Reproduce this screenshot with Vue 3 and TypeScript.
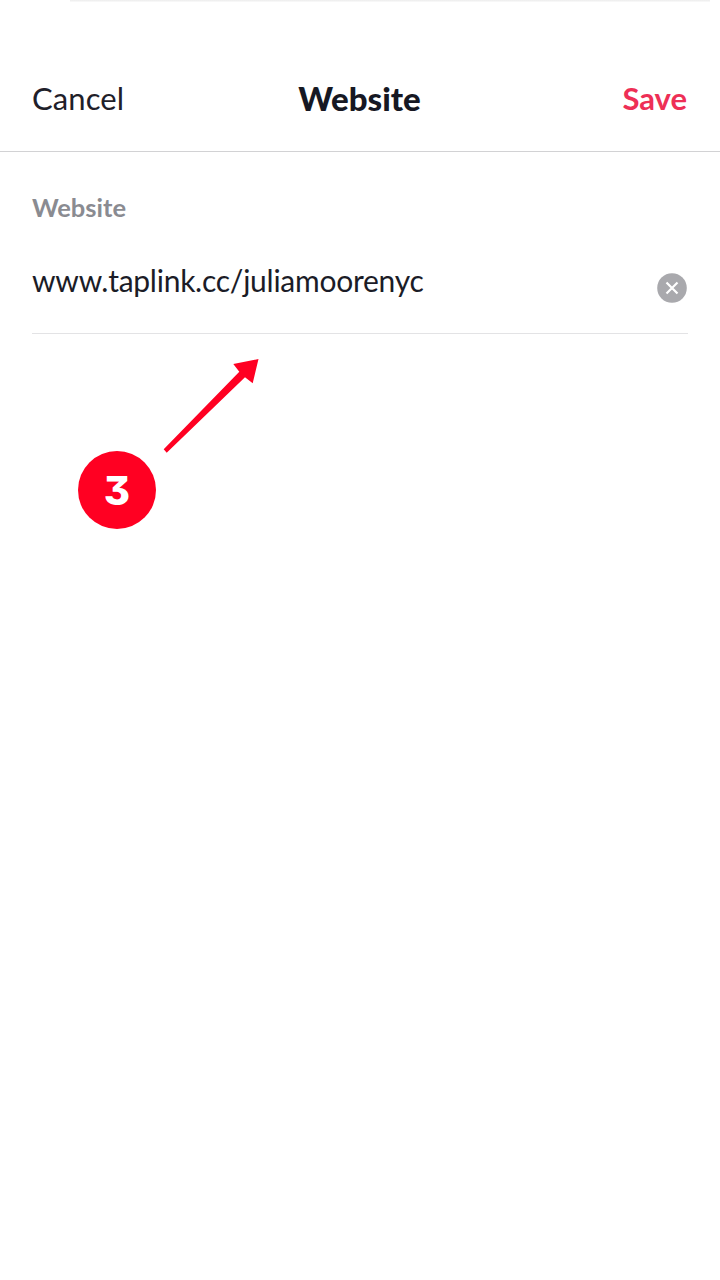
<script setup lang="ts">
const title: string = 'Website'
const url: string = 'www.taplink.cc/juliamoorenyc'
</script>

<template>
  <div class="page">
    <div class="sliver"></div>
    <header class="bar">
      <span class="cancel">Cancel</span>
      <span class="title">{{ title }}</span>
      <span class="save">Save</span>
    </header>
    <main class="form">
      <div class="label">{{ title }}</div>
      <div class="field">
        <span class="value">{{ url }}</span>
        <svg class="clear" width="30" height="30" viewBox="0 0 30 30">
          <circle cx="15" cy="15" r="14.8" fill="#a9a9ad" />
          <path d="M9.5 9.5L20.5 20.5M20.5 9.5L9.5 20.5" stroke="#fff" stroke-width="2.2" />
        </svg>
      </div>
    </main>
    <svg class="arrow" width="110" height="110" viewBox="0 0 110 110">
      <path d="M8.7 94.3L84.3 16.7L78.3 9L103.5 4L97.7 28.3L90 22.3L11.7 97.7Z" fill="#ff0022" />
    </svg>
    <div class="badge"><span class="digit">3</span></div>
  </div>
</template>

<style>
html, body { margin: 0; background: #fff; }
</style>

<style scoped>
.page {
  position: relative;
  width: 720px;
  height: 1280px;
  background: #fff;
  overflow: hidden;
  font-family: "Lato", "Open Sans", sans-serif;
  color: #1b1c27;
}
.sliver {
  height: 2px;
  margin: 0 10px 0 70px;
  background: linear-gradient(#ececec, #fbfbfb);
}
.bar {
  box-sizing: border-box;
  height: 150px;
  padding: 42px 33px 0 32px;
  display: grid;
  grid-template-columns: 1fr auto 1fr;
  align-items: center;
  border-bottom: 1.5px solid #d2d2d4;
}
.cancel { font-size: 31px; letter-spacing: 0.1px; color: #1f2029; }
.title { font-size: 33px; font-weight: 900; color: #161823; }
.save { font-size: 31px; font-weight: 700; color: #ee2f56; justify-self: end; }
.form { padding: 0 32px; }
.label {
  margin-top: 38px;
  font-size: 25.5px;
  line-height: 34px;
  font-weight: 700;
  color: #8a8b91;
}
.field {
  box-sizing: border-box;
  height: 110px;
  padding: 41px 1px 0 0;
  display: flex;
  align-items: flex-start;
  justify-content: space-between;
  border-bottom: 1px solid #e3e3e5;
}
.value {
  font-size: 30px;
  line-height: 30px;
  letter-spacing: -0.25px;
  color: #1b1c27;
}
.clear { margin-top: 8px; }
.arrow { position: absolute; left: 155px; top: 355px; }
.badge {
  position: absolute;
  left: 78px;
  top: 451px;
  width: 78px;
  height: 78px;
  border-radius: 50%;
  background: #ff0022;
  color: #fff;
  display: flex;
  align-items: center;
  justify-content: center;
  font-family: "Inter", "Lato", sans-serif;
  font-feature-settings: "cv09" 1;
  font-size: 40px;
  font-weight: 800;
  line-height: 1;
}
.digit { padding-top: 2px; }
</style>
